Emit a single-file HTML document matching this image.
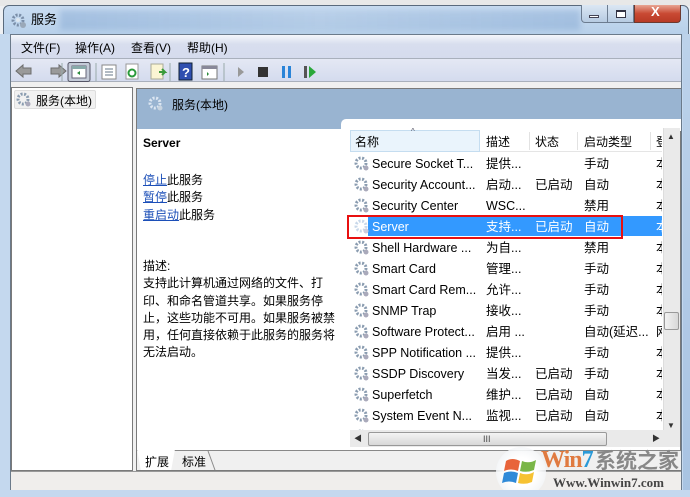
<!DOCTYPE html>
<html><head><meta charset="utf-8"><style>
*{margin:0;padding:0;box-sizing:border-box}
body{width:690px;height:497px;overflow:hidden;background:#eef0f3;font-family:"Liberation Sans","Noto Sans CJK SC",sans-serif;font-size:12px;color:#000;position:relative}
.a{position:absolute}
.t{position:absolute;white-space:nowrap;line-height:16px}
a{color:#1c4fb8;text-decoration:underline}
.r{position:absolute;left:0;height:21px;width:310px;white-space:nowrap}
.r span{position:absolute;top:3px;line-height:16px}
.r svg{position:absolute;left:2px;top:3px}
</style></head><body>
<div class="a" style="left:0;top:0;width:690px;height:6px;background:#e8e8e8"></div>
<div class="a" style="left:3px;top:5px;width:686px;height:492px;border:1px solid #5a6a7c;border-radius:6px 6px 0 0;background:linear-gradient(180deg,#c9dcf1 0,#b6cfe9 30px,#c3d8ee 40px,#c5d9ef 100%)"></div>
<div class="a" style="left:60px;top:10px;width:520px;height:20px;background:linear-gradient(90deg,rgba(110,150,200,.35),rgba(150,180,215,.25),rgba(110,150,200,.35));filter:blur(3px)"></div>
<svg class="a" style="left:11px;top:13px" width="16" height="16"><circle cx="7" cy="7" r="5" fill="none" stroke="#7a8ea8" stroke-width="3" stroke-dasharray="2 1.5"/><circle cx="7" cy="7" r="2" fill="#dde6ee"/><circle cx="12" cy="12" r="3" fill="#9aa8b8"/></svg>
<div class="t" style="left:31px;top:12px;font-size:13px">服务</div>
<div class="a" style="left:581px;top:5px;width:27px;height:18px;border:1px solid #6c7c90;border-top:none;border-radius:0 0 0 4px;background:linear-gradient(#dbe7f4,#b7cbe2)"></div>
<div class="a" style="left:589px;top:15px;width:10px;height:3px;background:#fff;border:1px solid #445"></div>
<div class="a" style="left:608px;top:5px;width:26px;height:18px;border:1px solid #6c7c90;border-top:none;border-left:none;background:linear-gradient(#dbe7f4,#b7cbe2)"></div>
<div class="a" style="left:616px;top:10px;width:10px;height:8px;border:1px solid #334;border-top-width:2px;background:#fff"></div>
<div class="a" style="left:634px;top:5px;width:47px;height:18px;border:1px solid #6c3a30;border-top:none;border-radius:0 0 4px 0;background:linear-gradient(#e8a593,#c94a34 50%,#b83a25)"></div>
<div class="t" style="left:651px;top:4px;color:#fff;font-weight:bold;font-size:13px">X</div>
<div class="a" style="left:10px;top:34px;width:672px;height:459px;background:#f0f0f0;border:1px solid #6b7a8a"></div>
<div class="a" style="left:11px;top:35px;width:670px;height:24px;background:linear-gradient(#f4f6fb,#d8deee 40%,#d5dbed);border-bottom:1px solid #a9b0bc"></div>
<div class="t" style="left:21px;top:40px">文件(F)</div>
<div class="t" style="left:75px;top:40px">操作(A)</div>
<div class="t" style="left:131px;top:40px">查看(V)</div>
<div class="t" style="left:187px;top:40px">帮助(H)</div>
<div class="a" style="left:11px;top:59px;width:670px;height:23px;background:linear-gradient(#e4e8f4,#d4dbee);border-bottom:1px solid #a9b0bc"></div>
<svg class="a" style="left:14px;top:62px" width="320" height="20">
<path d="M2 9 L9 3 V6 H17 V12 H9 V15Z" fill="#9a9a9a" stroke="#6d6d6d"/>
<path d="M52 9 L45 3 V6 H37 V12 H45 V15Z" fill="#9a9a9a" stroke="#6d6d6d"/>
<line x1="48" y1="1" x2="48" y2="19" stroke="#9aa"/>
<rect x="54" y="0.5" width="22" height="19" rx="2" fill="#c4cbd8" stroke="#556"/>
<rect x="58" y="4" width="14" height="12" fill="#fff" stroke="#667"/><rect x="58" y="4" width="14" height="3" fill="#8aa"/><path d="M66 9 L63 11 L66 13Z" fill="#2a8a3a"/>
<line x1="82" y1="1" x2="82" y2="19" stroke="#9aa"/>
<rect x="88" y="3" width="14" height="14" fill="#fff" stroke="#888"/><path d="M91 7h8M91 10h8M91 13h8" stroke="#678"/>
<rect x="112" y="2" width="12" height="15" fill="#fff" stroke="#999"/><circle cx="118" cy="11" r="3.5" fill="none" stroke="#2a9a3a" stroke-width="2"/>
<rect x="137" y="2" width="12" height="15" fill="#fbf5d4" stroke="#aa9"/><path d="M145 10h6l-3-3M151 10l-3 3" stroke="#3a9a3a" stroke-width="2" fill="none"/>
<line x1="156" y1="1" x2="156" y2="19" stroke="#9aa"/>
<rect x="165" y="1" width="13" height="17" fill="#2f4fb0" stroke="#123"/><text x="168" y="15" fill="#fff" font-size="13" font-weight="bold" font-family="Liberation Sans">?</text>
<rect x="188" y="4" width="15" height="13" fill="#fff" stroke="#777"/><rect x="188" y="4" width="15" height="3" fill="#889"/><path d="M193 10v4l2-2z" fill="#2a8a3a"/>
<line x1="210" y1="1" x2="210" y2="19" stroke="#9aa"/>
<path d="M224 5 L230 10 L224 15Z" fill="#999"/>
<rect x="244" y="5" width="10" height="10" fill="#333"/>
<rect x="268" y="4" width="3" height="12" fill="#2a84d8"/><rect x="274" y="4" width="3" height="12" fill="#2a84d8"/>
<rect x="290" y="4" width="3" height="12" fill="#555"/><path d="M295 4 L302 10 L295 16Z" fill="#2aa83a"/>
</svg>
<div class="a" style="left:11px;top:87px;width:122px;height:384px;background:#fff;border:1px solid #7a7a7a"></div>
<div class="a" style="left:14px;top:90px;width:82px;height:19px;background:#f1f1f1;border:1px solid #ddd;border-radius:2px"></div>
<svg class="a" style="left:16px;top:92px" width="16" height="16"><circle cx="7" cy="7" r="5" fill="none" stroke="#8a9cb0" stroke-width="3" stroke-dasharray="2 1.5"/><circle cx="12" cy="12" r="2.5" fill="#aab"/></svg>
<div class="t" style="left:36px;top:93px">服务(本地)</div>
<div class="a" style="left:136px;top:88px;width:545px;height:383px;background:#fff;border:1px solid #7a7a7a"></div>
<div class="a" style="left:137px;top:89px;width:544px;height:40px;background:#99b4d1"></div>
<div class="a" style="left:341px;top:119px;width:340px;height:12px;background:#fff;border-radius:5px 0 0 0"></div>
<svg class="a" style="left:148px;top:96px" width="16" height="16"><circle cx="7" cy="7" r="5" fill="none" stroke="#dce6f2" stroke-width="3" stroke-dasharray="2 1.5"/><circle cx="12" cy="12" r="2.5" fill="#c8d4e0"/></svg>
<div class="t" style="left:172px;top:97px">服务(本地)</div>
<div class="t" style="left:143px;top:135px;font-weight:bold">Server</div>
<div class="t" style="left:143px;top:172px"><a>停止</a>此服务</div>
<div class="t" style="left:143px;top:189px"><a>暂停</a>此服务</div>
<div class="t" style="left:143px;top:207px"><a>重启动</a>此服务</div>
<div class="a" style="left:143px;top:258px;width:200px;line-height:17.3px">描述:<br>支持此计算机通过网络的文件、打印、和命名管道共享。如果服务停止，这些功能不可用。如果服务被禁用，任何直接依赖于此服务的服务将无法启动。</div>
<div class="a" style="left:350px;top:130px;width:312px;height:22px;background:#fff;border-bottom:1px solid #e5e5e5"></div>
<div class="a" style="left:350px;top:130px;width:130px;height:22px;background:#eaf4fc;border:1px solid #c5ddf0"></div>
<div class="a" style="left:529px;top:132px;width:1px;height:18px;background:#e2e2e2"></div>
<div class="a" style="left:577px;top:132px;width:1px;height:18px;background:#e2e2e2"></div>
<div class="a" style="left:650px;top:132px;width:1px;height:18px;background:#e2e2e2"></div>
<div class="t" style="left:411px;top:124px;font-size:8px;color:#556">^</div>
<div class="t" style="left:355px;top:134px">名称</div>
<div class="t" style="left:486px;top:134px">描述</div>
<div class="t" style="left:535px;top:134px">状态</div>
<div class="t" style="left:584px;top:134px">启动类型</div>
<div class="t" style="left:656px;top:134px;width:6px;overflow:hidden">登</div>
<div class="a" style="left:368px;top:216px;width:294px;height:20px;background:#3399ff"></div>
<div class="a" style="left:347px;top:215px;width:276px;height:24px;border:2px solid #e81010"></div>
<div class="a" style="left:663px;top:128px;width:17px;height:302px;background:#eaeaea;border-left:1px solid #ddd"></div>
<div class="t" style="left:667px;top:129px;font-size:8px;color:#333">▲</div>
<div class="t" style="left:667px;top:418px;font-size:8px;color:#333">▼</div>
<div class="a" style="left:664px;top:312px;width:15px;height:18px;background:linear-gradient(90deg,#f2f2f2,#d8d8d8);border:1px solid #999;border-radius:2px"></div>
<div class="a" style="left:350px;top:430px;width:313px;height:17px;background:#eaeaea"></div>
<div class="t" style="left:354px;top:431px;font-size:8px;color:#333">◀</div>
<div class="t" style="left:652px;top:431px;font-size:8px;color:#333">▶</div>
<div class="a" style="left:368px;top:432px;width:239px;height:14px;background:linear-gradient(#f4f4f4,#d8d8d8);border:1px solid #999;border-radius:2px"></div>
<div class="t" style="left:483px;top:431px;font-size:9px;color:#444">III</div>
<div class="a" style="left:663px;top:430px;width:17px;height:17px;background:#eaeaea"></div>
<div class="a" style="left:137px;top:450px;width:544px;height:20px;background:#f0f0f0;border-top:1px solid #888"></div>
<div class="a" style="left:137px;top:449px;width:38px;height:21px;background:#fff;clip-path:polygon(0 0,100% 0,90% 100%,10% 100%);"></div>
<div class="t" style="left:145px;top:454px">扩展</div>
<div class="t" style="left:182px;top:454px">标准</div>
<div class="a" style="left:211px;top:451px;width:1px;height:19px;background:#888;transform:skewX(20deg)"></div>
<div class="a" style="left:11px;top:471px;width:670px;height:21px;background:#f0eeec;border-top:1px solid #999"></div>
<div class="a" style="left:496px;top:447px;width:50px;height:50px;border-radius:50%;background:radial-gradient(#fff 40%,rgba(230,235,240,.7))"></div>
<svg class="a" style="left:502px;top:455px" width="40" height="36"><path d="M4 6 Q10 2 18 6 L16 16 Q9 13 2 16Z" fill="#e8643a"/><path d="M20 6 Q27 9 34 5 L32 15 Q25 18 18 16Z" fill="#7ab648"/><path d="M2 18 Q9 15 16 18 L14 28 Q7 25 0 28Z" fill="#2f8ad8"/><path d="M18 18 Q25 21 32 17 L30 27 Q23 30 16 28Z" fill="#f6c232"/></svg>
<div class="t" style="left:541px;top:447px;font:bold 24px 'Liberation Serif',serif;color:#e07a40;letter-spacing:-1px;line-height:26px">Win<span style="color:#2a9ad8">7</span></div>
<div class="t" style="left:595px;top:448px;font:bold 21px 'Noto Sans CJK SC',sans-serif;color:#888;line-height:24px">系统之家</div>
<div class="t" style="left:553px;top:475px;font:bold 13px 'Liberation Serif',serif;color:#444">Www.Winwin7.com</div>
<div class="a" style="left:683px;top:34px;width:7px;height:463px;background:linear-gradient(#bcd2ea,#a8c3e2)"></div>
<div class="a" style="left:0;top:490px;width:690px;height:7px;background:#c4d8ee"></div>
<div class="a" style="left:0;top:34px;width:10px;height:463px;background:#c4d8ee"></div>
<div class="a" style="left:352px;top:153px;width:310px;height:277px;overflow:hidden;font-size:12.5px">
<div class="r" style="top:0"><svg width="16" height="16"><circle cx="7" cy="7" r="5" fill="none" stroke="#8a9cb0" stroke-width="3" stroke-dasharray="2 1.5"/><circle cx="12" cy="12" r="2.5" fill="#aab"/></svg><span style="left:20px">Secure Socket T...</span><span style="left:134px">提供...</span><span style="left:232px">手动</span><span style="left:304px">本</span></div>
<div class="r" style="top:21px"><svg width="16" height="16"><circle cx="7" cy="7" r="5" fill="none" stroke="#8a9cb0" stroke-width="3" stroke-dasharray="2 1.5"/><circle cx="12" cy="12" r="2.5" fill="#aab"/></svg><span style="left:20px">Security Account...</span><span style="left:134px">启动...</span><span style="left:183px">已启动</span><span style="left:232px">自动</span><span style="left:304px">本</span></div>
<div class="r" style="top:42px"><svg width="16" height="16"><circle cx="7" cy="7" r="5" fill="none" stroke="#8a9cb0" stroke-width="3" stroke-dasharray="2 1.5"/><circle cx="12" cy="12" r="2.5" fill="#aab"/></svg><span style="left:20px">Security Center</span><span style="left:134px">WSC...</span><span style="left:232px">禁用</span><span style="left:304px">本</span></div>
<div class="r" style="top:63px;color:#fff"><svg width="16" height="16"><circle cx="7" cy="7" r="5" fill="none" stroke="#c8d8ea" stroke-width="3" stroke-dasharray="2 1.5"/><circle cx="12" cy="12" r="2.5" fill="#ccd"/></svg><span style="left:20px">Server</span><span style="left:134px">支持...</span><span style="left:183px">已启动</span><span style="left:232px">自动</span><span style="left:304px">本</span></div>
<div class="r" style="top:84px"><svg width="16" height="16"><circle cx="7" cy="7" r="5" fill="none" stroke="#8a9cb0" stroke-width="3" stroke-dasharray="2 1.5"/><circle cx="12" cy="12" r="2.5" fill="#aab"/></svg><span style="left:20px">Shell Hardware ...</span><span style="left:134px">为自...</span><span style="left:232px">禁用</span><span style="left:304px">本</span></div>
<div class="r" style="top:105px"><svg width="16" height="16"><circle cx="7" cy="7" r="5" fill="none" stroke="#8a9cb0" stroke-width="3" stroke-dasharray="2 1.5"/><circle cx="12" cy="12" r="2.5" fill="#aab"/></svg><span style="left:20px">Smart Card</span><span style="left:134px">管理...</span><span style="left:232px">手动</span><span style="left:304px">本</span></div>
<div class="r" style="top:126px"><svg width="16" height="16"><circle cx="7" cy="7" r="5" fill="none" stroke="#8a9cb0" stroke-width="3" stroke-dasharray="2 1.5"/><circle cx="12" cy="12" r="2.5" fill="#aab"/></svg><span style="left:20px">Smart Card Rem...</span><span style="left:134px">允许...</span><span style="left:232px">手动</span><span style="left:304px">本</span></div>
<div class="r" style="top:147px"><svg width="16" height="16"><circle cx="7" cy="7" r="5" fill="none" stroke="#8a9cb0" stroke-width="3" stroke-dasharray="2 1.5"/><circle cx="12" cy="12" r="2.5" fill="#aab"/></svg><span style="left:20px">SNMP Trap</span><span style="left:134px">接收...</span><span style="left:232px">手动</span><span style="left:304px">本</span></div>
<div class="r" style="top:168px"><svg width="16" height="16"><circle cx="7" cy="7" r="5" fill="none" stroke="#8a9cb0" stroke-width="3" stroke-dasharray="2 1.5"/><circle cx="12" cy="12" r="2.5" fill="#aab"/></svg><span style="left:20px">Software Protect...</span><span style="left:134px">启用 ...</span><span style="left:232px">自动(延迟...</span><span style="left:304px">网</span></div>
<div class="r" style="top:189px"><svg width="16" height="16"><circle cx="7" cy="7" r="5" fill="none" stroke="#8a9cb0" stroke-width="3" stroke-dasharray="2 1.5"/><circle cx="12" cy="12" r="2.5" fill="#aab"/></svg><span style="left:20px">SPP Notification ...</span><span style="left:134px">提供...</span><span style="left:232px">手动</span><span style="left:304px">本</span></div>
<div class="r" style="top:210px"><svg width="16" height="16"><circle cx="7" cy="7" r="5" fill="none" stroke="#8a9cb0" stroke-width="3" stroke-dasharray="2 1.5"/><circle cx="12" cy="12" r="2.5" fill="#aab"/></svg><span style="left:20px">SSDP Discovery</span><span style="left:134px">当发...</span><span style="left:183px">已启动</span><span style="left:232px">手动</span><span style="left:304px">本</span></div>
<div class="r" style="top:231px"><svg width="16" height="16"><circle cx="7" cy="7" r="5" fill="none" stroke="#8a9cb0" stroke-width="3" stroke-dasharray="2 1.5"/><circle cx="12" cy="12" r="2.5" fill="#aab"/></svg><span style="left:20px">Superfetch</span><span style="left:134px">维护...</span><span style="left:183px">已启动</span><span style="left:232px">自动</span><span style="left:304px">本</span></div>
<div class="r" style="top:252px"><svg width="16" height="16"><circle cx="7" cy="7" r="5" fill="none" stroke="#8a9cb0" stroke-width="3" stroke-dasharray="2 1.5"/><circle cx="12" cy="12" r="2.5" fill="#aab"/></svg><span style="left:20px">System Event N...</span><span style="left:134px">监视...</span><span style="left:183px">已启动</span><span style="left:232px">自动</span><span style="left:304px">本</span></div>
<div class="r" style="top:273px"><svg width="16" height="16"><circle cx="7" cy="7" r="5" fill="none" stroke="#8a9cb0" stroke-width="3" stroke-dasharray="2 1.5"/></svg></div>
</div>
</body></html>
